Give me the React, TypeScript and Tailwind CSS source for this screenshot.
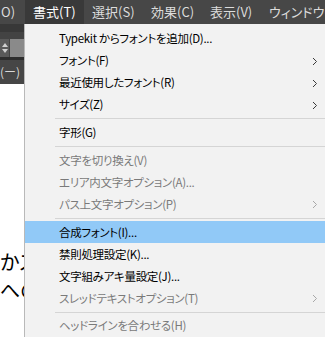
import React from 'react';

type Item =
  | { kind: 'sep' }
  | { kind: 'item'; label: string; disabled?: boolean; sub?: boolean; active?: boolean };

const items: Item[] = [
  { kind: 'item', label: 'Typekit からフォントを追加(D)...' },
  { kind: 'item', label: 'フォント(F)', sub: true },
  { kind: 'item', label: '最近使用したフォント(R)', sub: true },
  { kind: 'item', label: 'サイズ(Z)', sub: true },
  { kind: 'sep' },
  { kind: 'item', label: '字形(G)' },
  { kind: 'sep' },
  { kind: 'item', label: '文字を切り換え(V)', disabled: true },
  { kind: 'item', label: 'エリア内文字オプション(A)...', disabled: true },
  { kind: 'item', label: 'パス上文字オプション(P)', disabled: true, sub: true },
  { kind: 'sep' },
  { kind: 'item', label: '合成フォント(I)...', active: true },
  { kind: 'item', label: '禁則処理設定(K)...' },
  { kind: 'item', label: '文字組みアキ量設定(J)...' },
  { kind: 'item', label: 'スレッドテキストオプション(T)', disabled: true, sub: true },
  { kind: 'sep' },
  { kind: 'item', label: 'ヘッドラインを合わせる(H)', disabled: true },
];

const topMenus = ['書式(T)', '選択(S)', '効果(C)', '表示(V)', 'ウィンドウ(W)'];

function Chevron({ disabled }: { disabled?: boolean }) {
  return (
    <svg width="6" height="9" viewBox="0 0 6 9" className="shrink-0">
      <polyline
        points="1,1 4.5,4.5 1,8"
        fill="none"
        stroke={disabled ? '#a8a8a8' : '#3a3a3a'}
        strokeWidth="1"
      />
    </svg>
  );
}

export default function App() {
  return (
    <div className="flex h-[337px] w-[325px] flex-col overflow-hidden bg-white font-['Noto_Sans_CJK_JP',sans-serif] [font-feature-settings:'palt']">
      {/* menu bar */}
      <div className="flex h-[24px] shrink-0 items-center bg-[#474747] text-[13px] text-[#dcdcdc]">
        <div className="w-[25px] shrink-0 pl-px">O)</div>
        {topMenus.map((m, i) => (
          <div
            key={m}
            className={
              i === 0
                ? 'flex h-full w-[59px] shrink-0 items-center whitespace-nowrap bg-[#393939] pl-[8px] text-white'
                : 'flex h-full w-[59px] shrink-0 items-center whitespace-nowrap pl-[8px]'
            }
          >
            {m}
          </div>
        ))}
      </div>

      <div className="flex min-h-0 flex-1">
        {/* left strip of the app behind the menu */}
        <div className="flex w-[24px] shrink-0 flex-col overflow-hidden">
          <div className="h-[8px] bg-[#383838]" />
          <div className="h-[7px] bg-[#434343]" />
          <div className="flex h-[18px] bg-[#434343]">
            <div className="flex w-[9px] flex-col items-center justify-center gap-[2px] bg-[#5a5a5a]">
              <div className="h-0 w-0 border-x-[3px] border-b-[4px] border-x-transparent border-b-[#d0d0d0]" />
              <div className="h-0 w-0 border-x-[3px] border-t-[4px] border-x-transparent border-t-[#d0d0d0]" />
            </div>
            <div className="ml-px flex-1 bg-[#8a8a8a]" />
          </div>
          <div className="h-[3px] bg-[#2e2e2e]" />
          <div className="flex h-[24px] items-center whitespace-nowrap bg-[#464646] text-[12px] text-[#d8d8d8]">
            (ー)
          </div>
          <div className="flex flex-1 flex-col bg-white pt-[164px] text-[20px] leading-[28px] text-black">
            <div className="whitespace-nowrap">かス</div>
            <div className="whitespace-nowrap">への</div>
          </div>
        </div>

        {/* dropdown */}
        <div className="flex min-w-0 flex-1 flex-col border-l border-[#b9b9b9] bg-[#f2f2f2] pt-[4px] text-[11.5px] tracking-[-0.3px]">
          {items.map((it, i) =>
            it.kind === 'sep' ? (
              <div key={i} className="flex h-[7px] items-center pl-[30px]">
                <div className="h-px flex-1 bg-[#d5d5d5]" />
              </div>
            ) : (
              <div
                key={i}
                className={
                  'flex h-[22px] shrink-0 items-center justify-between whitespace-nowrap pl-[34px] pr-[7px] ' +
                  (it.active ? 'bg-[#91c9f7] ' : '') +
                  (it.disabled ? 'text-[#7a7a7a]' : 'text-black')
                }
              >
                <span>{it.label}</span>
                {it.sub ? <Chevron disabled={it.disabled} /> : null}
              </div>
            ),
          )}
        </div>
      </div>
    </div>
  );
}
